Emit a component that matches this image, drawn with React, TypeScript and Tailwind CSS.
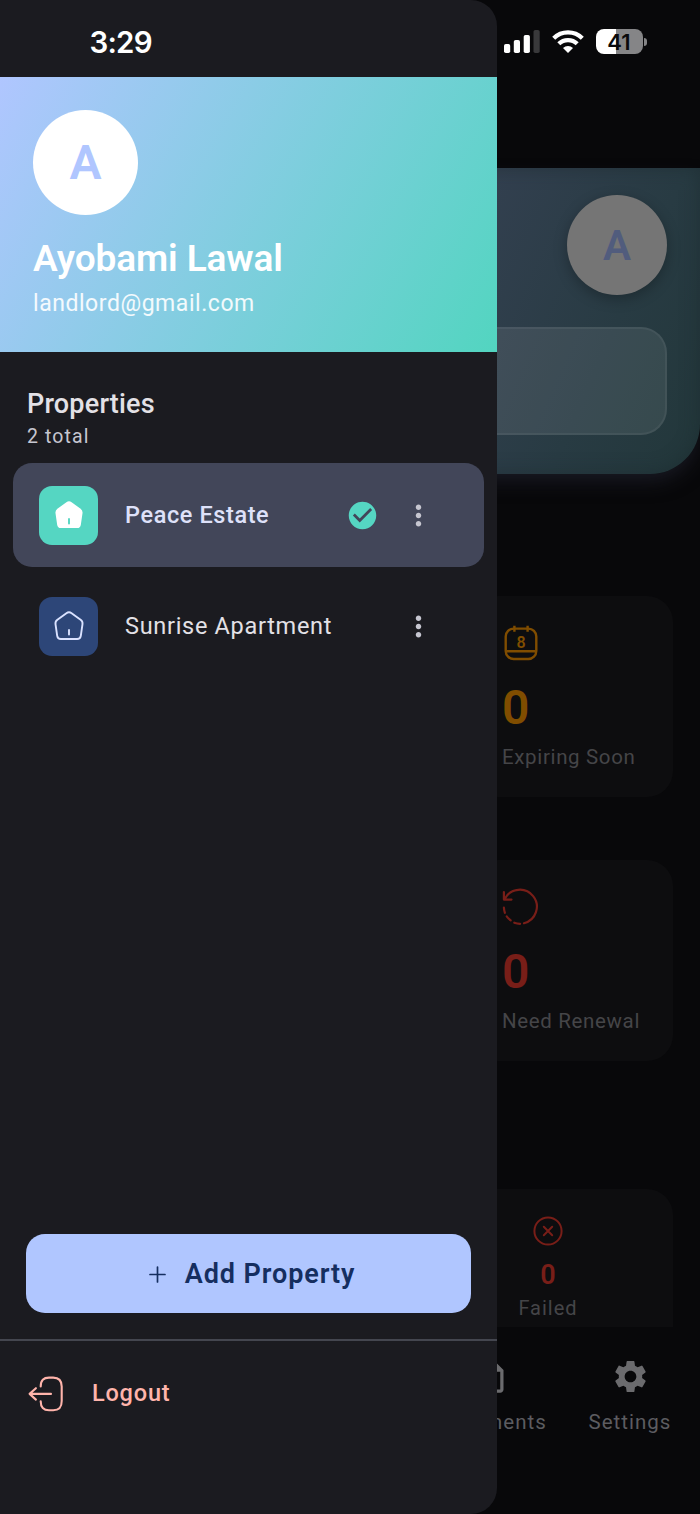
import type { ReactNode } from "react";
import { MdCheckCircle, MdMoreVert, MdOutlineInsertDriveFile, MdSettings } from "react-icons/md";

function SignalIcon() {
  return (
    <svg width="36" height="24" viewBox="0 0 36 24" fill="#fff">
      <rect x="0" y="14" width="6.2" height="9" rx="1.8" />
      <rect x="9.8" y="10" width="6.2" height="13" rx="1.8" />
      <rect x="19.7" y="5" width="6.2" height="18" rx="1.8" />
      <rect x="29.5" y="0" width="6.2" height="23" rx="1.8" fill="#39393b" />
    </svg>
  );
}

function WifiIcon() {
  return (
    <svg width="32" height="24" viewBox="0 0 32 24" fill="none" stroke="#fff" strokeWidth="4.3">
      <path d="M1.7 8.2a20.5 20.5 0 0 1 28.6 0" />
      <path d="M6.8 13.8a13.2 13.2 0 0 1 18.4 0" />
      <path d="M16 23l-5-5.1a7.3 7.3 0 0 1 10 0z" fill="#fff" stroke="none" />
    </svg>
  );
}

function Battery() {
  return (
    <div className="flex items-center gap-px">
      <div className="flex h-[25px] w-[47px] items-center justify-center rounded-[8px] bg-[linear-gradient(90deg,#fff_42%,#858587_42%)] font-['Inter',sans-serif] text-[22px] leading-none font-semibold text-[#09090b]">
        41
      </div>
      <div className="h-2 w-[3px] rounded-r-full bg-[#858587]" />
    </div>
  );
}

function StatusBar() {
  return (
    <div className="pointer-events-none absolute inset-x-0 top-0 z-20 flex h-[83px] items-center justify-between pr-[53.5px] pl-[89.5px]">
      <span className="mt-0.5 font-['Inter',sans-serif] text-[29.5px] leading-none font-semibold tracking-[-0.8px] text-white">3:29</span>
      <div className="flex items-center gap-3">
        <SignalIcon />
        <WifiIcon />
        <Battery />
      </div>
    </div>
  );
}

function HomeIcon({ filled }: { filled?: boolean }) {
  return (
    <svg width="32" height="32" viewBox="0 0 32 32" fill="none" strokeLinecap="round" strokeLinejoin="round">
      <path
        d="M13.4 3.2Q16 1.3 18.6 3.2L27.6 9.7Q29.9 11.4 29.5 14.2L27.8 25.9Q27.3 29 24.2 29H7.8Q4.7 29 4.2 25.9L2.5 14.2Q2.1 11.4 4.4 9.7Z"
        fill={filled ? "#fff" : "none"}
        stroke={filled ? "none" : "#dae2ff"}
        strokeWidth="1.9"
      />
      <path d="M16 20v4.6" stroke={filled ? "#55d6c2" : "#dae2ff"} strokeWidth="1.9" />
    </svg>
  );
}

function LogoutIcon() {
  return (
    <svg width="36" height="36" viewBox="0 0 36 36" fill="none" stroke="#ffb4ab" strokeWidth="2.1" strokeLinecap="round" strokeLinejoin="round">
      <path d="M12.7 10.4C12.7 4.2 15.5 1.6 21 1.6H25.2C31.5 1.6 33.7 4.6 33.7 10.6V25C33.7 31.2 31.5 34.2 25.2 34.2H21C15.5 34.2 12.7 31.4 12.7 25.2" />
      <path d="M23 17.9H1.8M7.9 12.2L1.6 17.9L7.9 23.6" />
    </svg>
  );
}

function CalendarIcon() {
  return (
    <svg width="38" height="36" viewBox="-1 0 38 36" fill="none" stroke="#804d00" strokeWidth="2.4">
      <rect x="2.7" y="3.6" width="30.6" height="30.4" rx="8" />
      <path d="M11.4 0.8v6M24.6 0.8v6M3.4 26.3H32.6" />
      <text x="18" y="22.6" textAnchor="middle" fill="#804d00" stroke="none" className="font-['Roboto',sans-serif] text-[16px] font-semibold">8</text>
    </svg>
  );
}

function RenewIcon() {
  return (
    <svg width="38" height="38" viewBox="0.7 0 38 38" fill="none" stroke="#781e18" strokeWidth="2.2" strokeLinecap="round" strokeLinejoin="round">
      <path d="M3.4 11A17 17 0 1 1 22.7 35.2M2.6 4v7.6h7.6" />
      <path d="M2.6 19.5a17 17 0 0 0 1 5.3M5.4 28.3a17 17 0 0 0 4 4M13 34.7a17 17 0 0 0 5.8 1.1" />
    </svg>
  );
}

function FailedIcon() {
  return (
    <svg width="30" height="30" viewBox="0 0 30 30" fill="none" stroke="#781e18" strokeWidth="2" strokeLinecap="round">
      <circle cx="15" cy="15" r="13.6" />
      <path d="M10.8 10.8l8.4 8.4M19.2 10.8l-8.4 8.4" />
    </svg>
  );
}

function StatCard({ icon, label, color }: { icon: ReactNode; label: string; color: string }) {
  return (
    <div className="ml-auto h-[201px] w-[201px] rounded-[26px] bg-[#0d0d0f] pt-7 pl-[30px]">
      <div className="flex h-[38px] items-center">{icon}</div>
      <p className={`mt-[18px] text-[48px] leading-[56px] font-semibold ${color}`}>0</p>
      <p className="mt-[9px] text-[20.5px] leading-6 tracking-[0.65px] whitespace-nowrap text-[#454548]">{label}</p>
    </div>
  );
}

function Dashboard() {
  return (
    <div className="flex h-full flex-col bg-[#08080a] pt-[168px]">
      <div className="flex h-[306px] shrink-0 flex-col items-end rounded-b-[50px] bg-[linear-gradient(114deg,#4d5170_0%,#334050_58%,#283b43_82%,#22373a_100%)] pt-[27px] pr-[33px] shadow-[0_10px_20px_-4px_#1a1b25,inset_0_0_18px_#1a272c80]">
        <div className="flex size-[100px] items-center justify-center rounded-full bg-[#757575] text-[42px] font-semibold text-[#515c7d] shadow-[0_4px_14px_#0004]">
          A
        </div>
        <div className="mt-8 h-[108px] w-[634px] rounded-[26px] border-2 border-white/5 bg-white/[0.085]" />
      </div>

      <div className="mt-[122px] flex flex-col gap-[63px] px-[27px]">
        <StatCard icon={<CalendarIcon />} label="Expiring Soon" color="text-[#804d00]" />
        <StatCard icon={<RenewIcon />} label="Need Renewal" color="text-[#781e18]" />
      </div>

      <div className="mx-[27px] mt-[128px] flex h-[138px] shrink-0 justify-end rounded-t-[26px] bg-[#0d0d0f] pt-[27px]">
        <div className="flex w-[250px] flex-col items-center">
          <FailedIcon />
          <p className="mt-[13px] text-[27px] leading-8 font-semibold text-[#781e18]">0</p>
          <p className="text-[20px] leading-[34px] tracking-[1px] text-[#454548]">Failed</p>
        </div>
      </div>

      <div className="grid flex-1 grid-cols-5 pt-[30px] text-[20.5px] tracking-[1px] text-[#5c5c60]">
        <div className="col-start-4 flex flex-col items-center gap-[14px]">
          <MdOutlineInsertDriveFile className="text-[39px] text-[#6b6b6e]" />
          <span className="leading-6">Documents</span>
        </div>
        <div className="flex flex-col items-center gap-[14px]">
          <MdSettings className="text-[39px] text-[#6b6b6e]" />
          <span className="leading-6">Settings</span>
        </div>
      </div>
    </div>
  );
}

function PropertyRow({ name, selected }: { name: string; selected?: boolean }) {
  return (
    <div className={`flex h-[104px] items-center rounded-[19px] pt-px pr-[49px] pl-[26px] ${selected ? "bg-[#424659]" : ""}`}>
      <div className={`flex size-[59px] items-center justify-center rounded-[13px] ${selected ? "bg-[#55d6c2]" : "bg-[#2d4678]"}`}>
        <HomeIcon filled={selected} />
      </div>
      <span
        className={`mt-0.5 ml-[27px] flex-1 text-[23.5px] whitespace-nowrap ${
          selected ? "font-medium tracking-[0.6px] text-[#dee1f9]" : "tracking-[0.7px] text-[#e3e1e6]"
        }`}
      >
        {name}
      </span>
      {selected && <MdCheckCircle className="mr-[23px] text-[33px] text-[#55d6c2]" />}
      <MdMoreVert className="text-[33px] text-[#c6c6d0]" />
    </div>
  );
}

function Drawer() {
  return (
    <aside className="absolute inset-y-0 left-0 z-10 flex w-[497px] flex-col overflow-hidden rounded-r-[26px] bg-[#1b1b20] pt-[77px]">
      <header className="h-[274.5px] bg-[linear-gradient(119deg,#b0c6ff_0%,#52d5c0_100%)] px-[33px] pt-[32.5px]">
        <div className="flex size-[105px] items-center justify-center rounded-full bg-white pt-0.5 text-[48px] font-semibold text-[#b0c6ff]">A</div>
        <h1 className="mt-[22px] text-[37px] leading-[44px] font-semibold tracking-[-0.1px] whitespace-nowrap text-white">Ayobami Lawal</h1>
        <p className="mt-[9px] text-[23px] leading-7 tracking-[0.55px] text-white/90">landlord@gmail.com</p>
      </header>

      <section className="flex flex-1 flex-col">
        <div className="px-[27px] pt-9">
          <h2 className="text-[27px] leading-8 font-medium tracking-[0.2px] text-[#e3e1e6]">Properties</h2>
          <p className="mt-[5px] text-[19.5px] leading-6 tracking-[1.1px] text-[#c6c6d0]">2 total</p>
        </div>
        <div className="mt-[14px] flex flex-col gap-[7px] px-[13px]">
          <PropertyRow name="Peace Estate" selected />
          <PropertyRow name="Sunrise Apartment" />
        </div>
        <button className="mx-[26px] mt-auto mb-[26px] flex h-[79px] items-center justify-center gap-[19px] rounded-[19px] bg-[#b0c6ff] pt-px pl-[7px] text-[27px] font-semibold tracking-[0.9px] text-[#152e60]">
          <svg width="17" height="17" viewBox="0 0 17 17" stroke="#152e60" strokeWidth="1.7" strokeLinecap="round">
            <path d="M8.5 1v15M1 8.5h15" />
          </svg>
          Add Property
        </button>
      </section>

      <footer className="h-[175px] border-t-2 border-[#44464f] px-7 pt-[35px]">
        <button className="flex items-center gap-7 text-[23.5px] font-medium tracking-[0.8px] text-[#ffb4ab]">
          <LogoutIcon />
          Logout
        </button>
      </footer>
    </aside>
  );
}

export default function App() {
  return (
    <main className="relative h-[1514px] w-[700px] overflow-hidden bg-[#08080a] font-['Roboto',sans-serif]">
      <Dashboard />
      <Drawer />
      <StatusBar />
    </main>
  );
}
